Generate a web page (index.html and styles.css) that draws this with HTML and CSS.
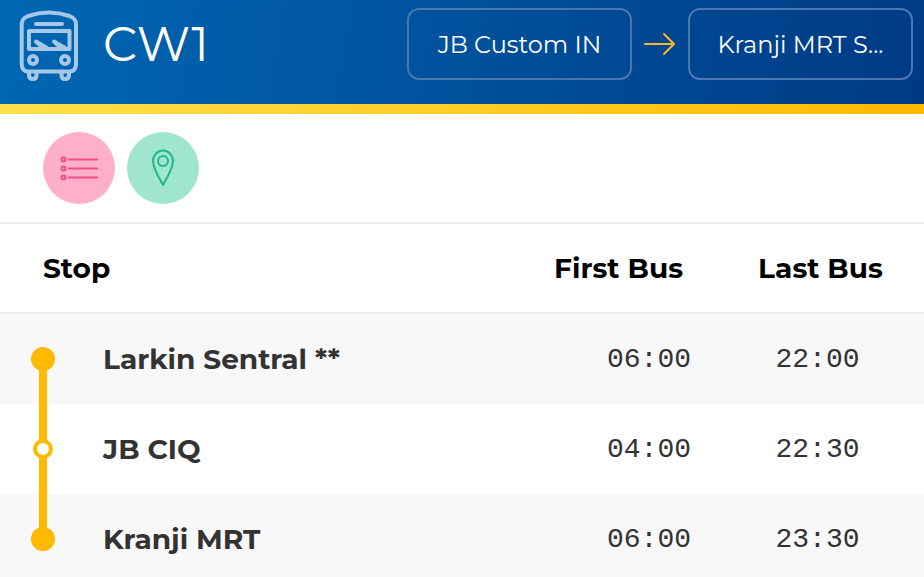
FILE: index.html
```
<!DOCTYPE html>
<html lang="en">

<head>
    <meta charset="UTF-8" />
    <meta name="viewport" content="width=device-width, initial-scale=1">
    <title>CW1</title>
    <link rel="stylesheet" href="styles.css">
</head>

<body>
    <header class="header">
        <svg class="bus-icon" viewBox="0 0 60 72" aria-hidden="true">
            <path d="M2.700 14 Q2.700 8.500 9 6 Q30 -1 50.500 6 Q57 8.500 57 14 V54 Q57 61.500 50 61.500 H9.500 Q2.700 61.500 2.700 54 Z" />
            <path d="M17 14 H43" />
            <path d="M10 21 H50.500 V39 H10 Z" />
            <path d="M17 31.500 L28 38 H24 Z M35 31.500 L46 38 H42 Z" />
            <circle cx="14" cy="50" r="4" />
            <circle cx="46" cy="50" r="4" />
            <path d="M10 62 V65 Q10 69 14 69 Q17.500 69 17.500 65 V62 M42.500 62 V65 Q42.500 69 46 69 Q50 69 50 65 V62" />
        </svg>
        <h1 class="title">CW1</h1>
        <div class="direction">
            <button type="button" class="place">JB Custom IN</button>
            <svg class="arrow" viewBox="0 0 32 24" aria-hidden="true">
                <path d="M1 12 H30 M20 2 L30 12 L20 22" />
            </svg>
            <button type="button" class="place">Kranji MRT S...</button>
        </div>
    </header>

    <nav class="toolbar">
        <a href="#stops" class="tool tool-list" aria-label="Stops">
            <svg viewBox="0 0 72 72">
                <path d="M26 27.500 H54 M26 36.500 H54 M26 45.500 H54" />
                <circle cx="20.500" cy="27.500" r="2" />
                <circle cx="20.500" cy="36.500" r="2" />
                <circle cx="20.500" cy="45.500" r="2" />
            </svg>
        </a>
        <a href="#map" class="tool tool-map" aria-label="Map">
            <svg viewBox="0 0 72 72">
                <path d="M36 53 C33 47 26 37 26 29 A10 10.500 0 0 1 46 29 C46 37 39 47 36 53 Z" />
                <circle cx="36" cy="29" r="5" />
            </svg>
        </a>
    </nav>

    <table class="stops" id="stops">
        <colgroup>
            <col class="col-route">
            <col>
            <col class="col-first">
            <col class="col-last">
        </colgroup>
        <thead>
            <tr>
                <th class="stop" colspan="2">Stop</th>
                <th class="first">First Bus</th>
                <th class="last">Last Bus</th>
            </tr>
        </thead>
        <tbody>
            <tr>
                <td class="route start"><span class="dot"></span></td>
                <td class="name">Larkin Sentral **</td>
                <td class="first">06:00</td>
                <td class="last">22:00</td>
            </tr>
            <tr>
                <td class="route"><span class="dot via"></span></td>
                <td class="name">JB CIQ</td>
                <td class="first">04:00</td>
                <td class="last">22:30</td>
            </tr>
            <tr>
                <td class="route end"><span class="dot"></span></td>
                <td class="name">Kranji MRT</td>
                <td class="first">06:00</td>
                <td class="last">23:30</td>
            </tr>
        </tbody>
    </table>
</body>

</html>
```
FILE: styles.css
```
* {
    box-sizing: border-box;
}

body {
    margin: 0;
    height: 100vh;
    overflow: hidden;
    background-color: #fff;
    color: #333;
    font-family: Montserrat, Inter, sans-serif;
}

.header {
    display: flex;
    align-items: flex-start;
    padding: 8px 11px 22px 19px;
    border-bottom: 10px solid;
    border-image: linear-gradient(to right, #ffe04c, #ffb900) 10;
    background: linear-gradient(100deg, #0067b3, #003a85);
}

.bus-icon {
    width: 60px;
    height: 72px;
    margin-top: 2px;
    margin-right: 24px;
    fill: none;
    stroke: #a6c8e8;
    stroke-width: 4;
    stroke-linecap: round;
    stroke-linejoin: round;
}

.title {
    margin: 0;
    color: #fff;
    font-size: 48px;
    font-weight: 400;
    line-height: 72px;
}

.direction {
    display: flex;
    align-items: center;
    margin-left: auto;
}

.place {
    width: 225px;
    height: 72px;
    padding: 0;
    border: 2px solid #4a77b2;
    border-radius: 12px;
    background: none;
    color: #fff;
    font-family: inherit;
    font-size: 24px;
}

.arrow {
    width: 32px;
    height: 24px;
    margin: 0 12px;
    fill: none;
    stroke: #fbb829;
    stroke-width: 2;
    stroke-linecap: round;
    stroke-linejoin: round;
}

.toolbar {
    display: flex;
    gap: 12px;
    padding: 18px 43px;
    border-bottom: 2px solid #ebebeb;
}

.tool {
    width: 72px;
    height: 72px;
    border-radius: 50%;
}

.tool svg {
    display: block;
    fill: none;
    stroke-width: 2;
    stroke-linecap: round;
    stroke-linejoin: round;
}

.tool-list {
    background-color: #ffafc9;
    stroke: #f34b87;
}

.tool-map {
    background-color: #a0e5cf;
    stroke: #1fb888;
}

.stops {
    width: 100%;
    border-collapse: separate;
    border-spacing: 0;
    table-layout: fixed;
}

.col-route {
    width: 86px;
}

.col-first {
    width: 220px;
}

.col-last {
    width: 191px;
}

.stops th {
    height: 90px;
    padding: 0;
    border-bottom: 2px solid #ebebeb;
    color: #000;
    font-size: 28px;
    font-weight: 700;
}

.stops td {
    height: 90px;
    padding: 0;
    font-family: "Courier New", "Liberation Mono", monospace;
    font-size: 28px;
}

.stops tbody tr:nth-child(odd) {
    background-color: #f8f8f8;
}

.stops .stop {
    padding-left: 43px;
    text-align: left;
}

.stops .first {
    padding-right: 42px;
    text-align: right;
}

.stops th.first {
    padding-right: 50px;
}

.stops .last {
    padding-right: 22px;
    text-align: center;
}

.stops th.last {
    padding-right: 16px;
}

.stops .name {
    padding-left: 17px;
    font-family: inherit;
    font-weight: 700;
}

/* route line */
.stops .route {
    position: relative;
}

.route::before {
    content: "";
    position: absolute;
    top: 0;
    bottom: 0;
    left: 39px;
    width: 8px;
    background-color: #ffb900;
}

.route.start::before {
    top: 50%;
}

.route.end::before {
    bottom: 50%;
}

.dot {
    position: relative;
    display: block;
    width: 24px;
    height: 24px;
    margin: 0 auto;
    border-radius: 50%;
    background-color: #ffb900;
}

.dot.via {
    width: 20px;
    height: 20px;
    border: 4px solid #ffb900;
    background-color: #fff;
}
```
